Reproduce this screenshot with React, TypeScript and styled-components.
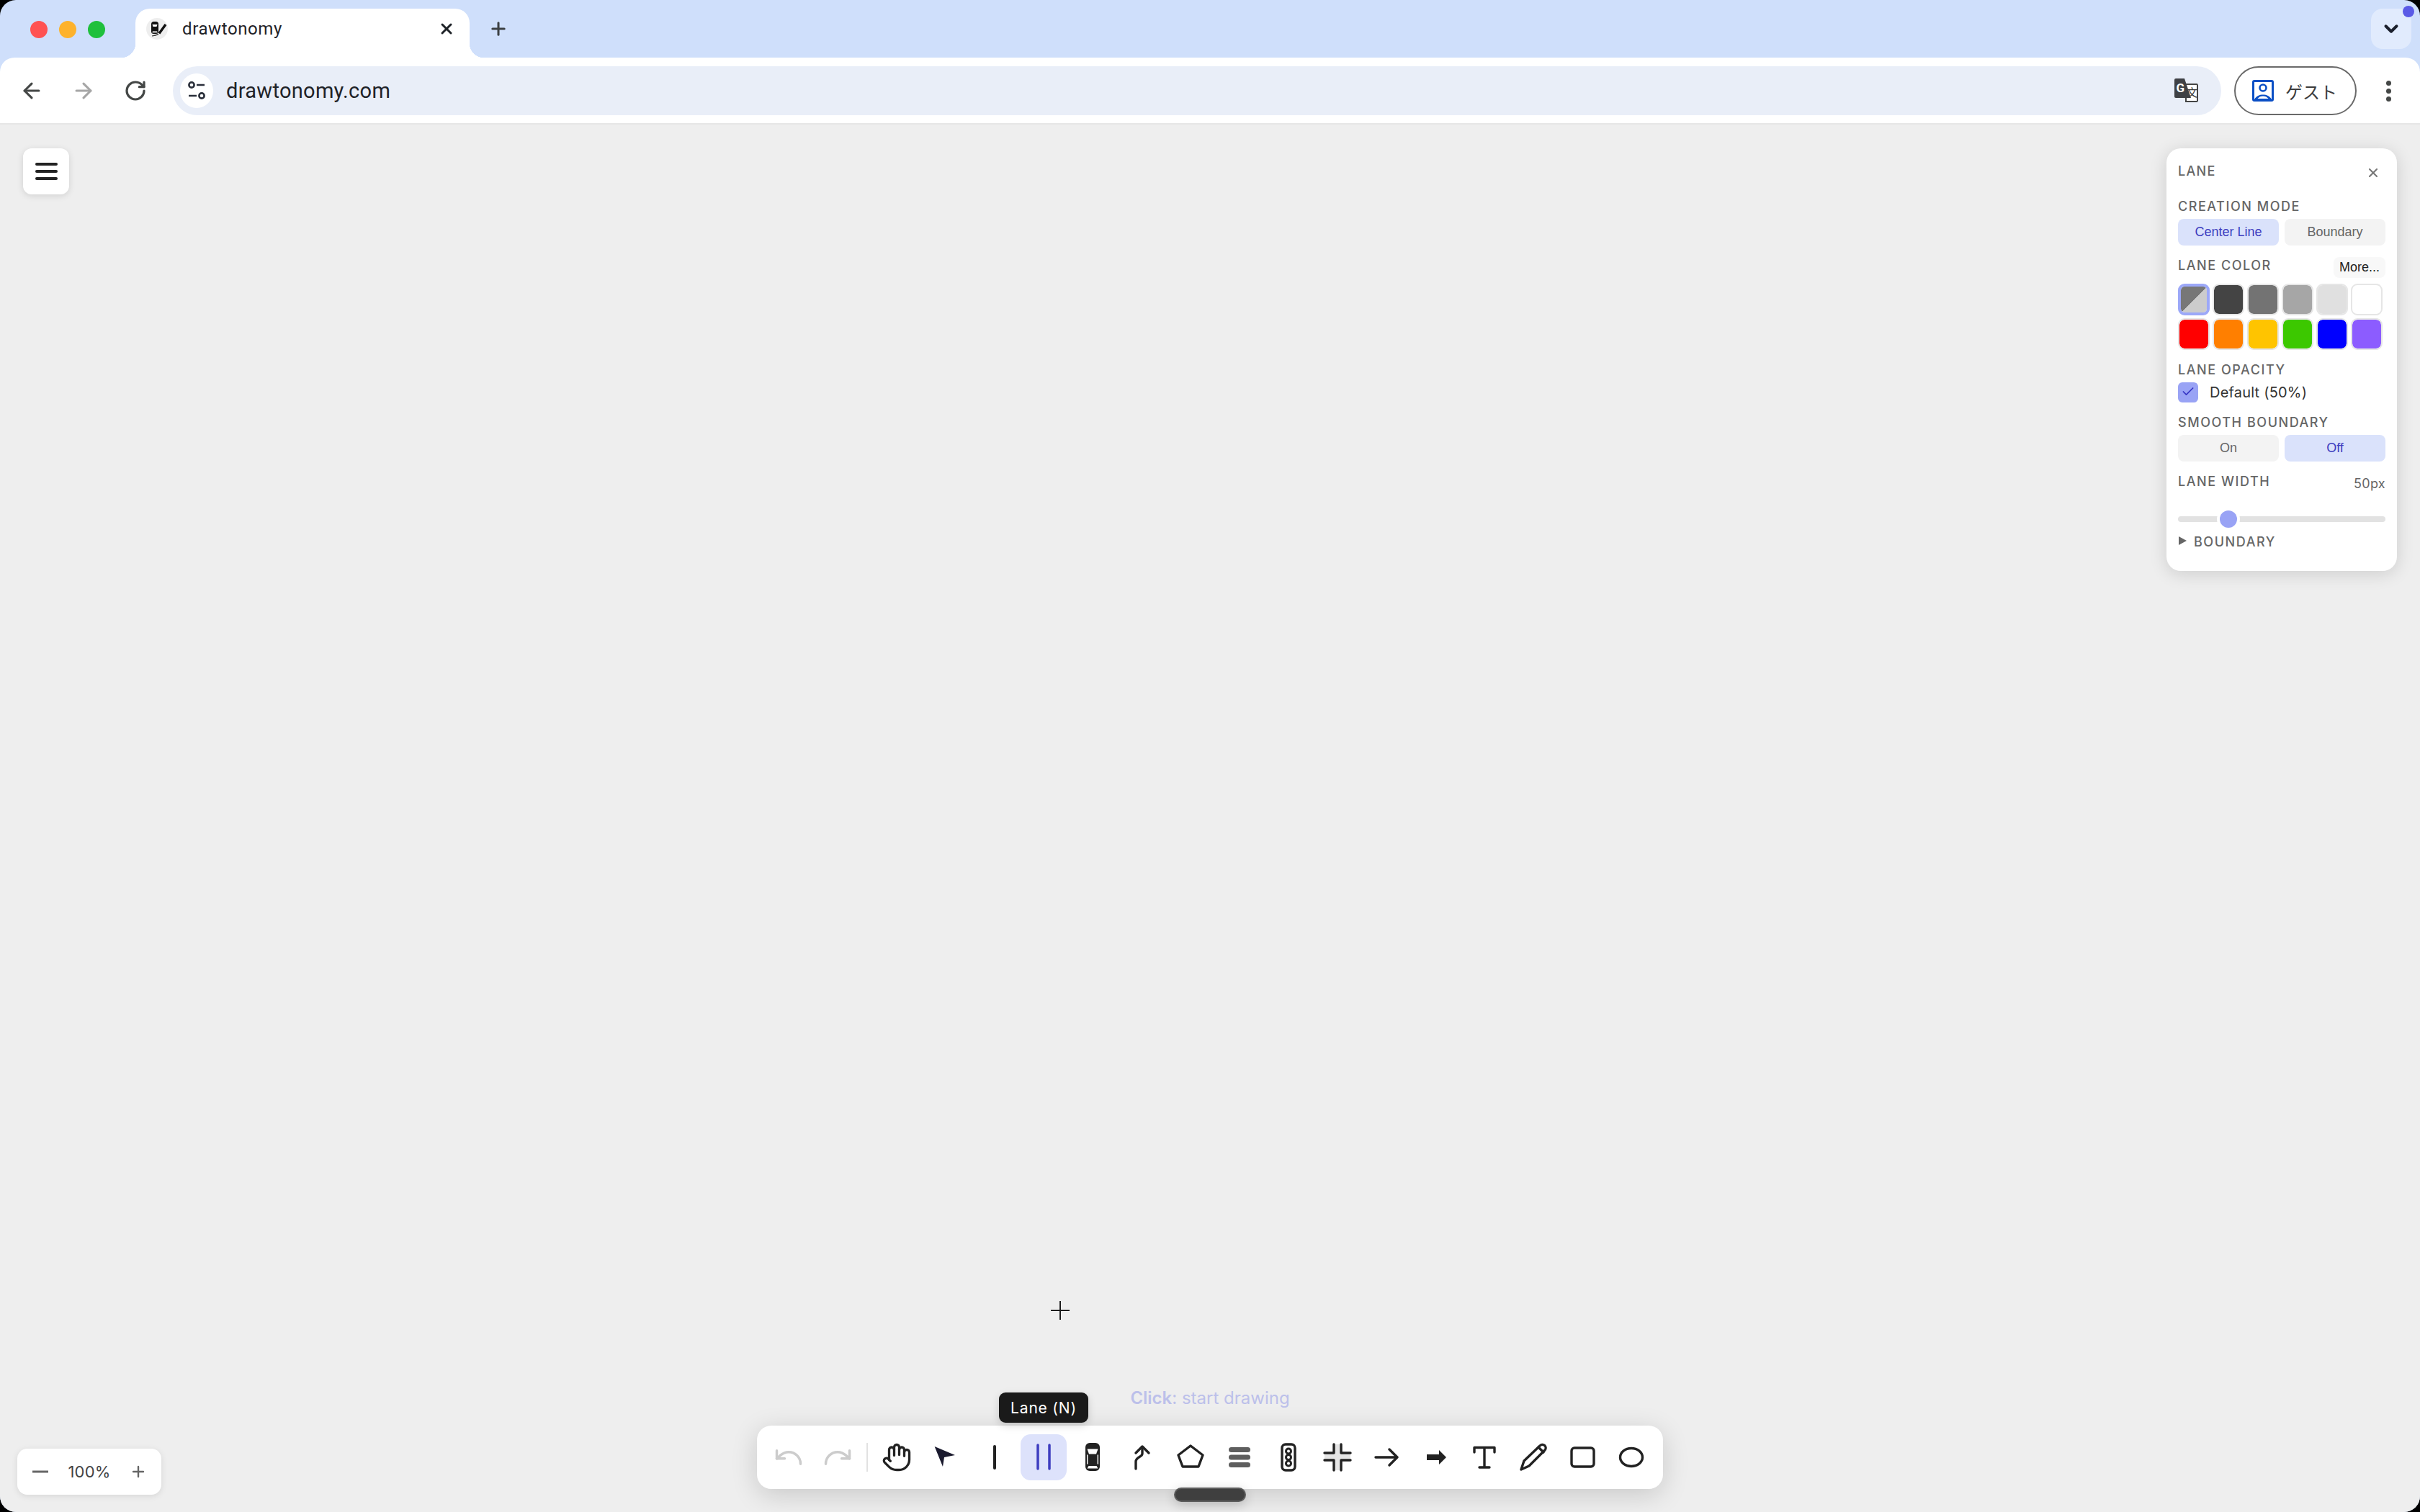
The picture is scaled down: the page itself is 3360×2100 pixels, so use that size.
import React from 'react';
import styled, { createGlobalStyle } from 'styled-components';
import { ArrowLeft, ArrowRight, RotateCw, Undo, Redo, Hand, X, Plus, ChevronDown, Check } from 'lucide-react';

const GlobalStyle = createGlobalStyle`
  html, body {
    margin: 0;
    background: #000;
  }
  * {
    box-sizing: border-box;
  }
`;

const BrowserWindow = styled.div`
  width: 3360px;
  height: 2100px;
  display: flex;
  flex-direction: column;
  overflow: hidden;
  border-radius: 22px;
  background: #cfdffb;
  font-family: Inter, "Noto Sans CJK JP", sans-serif;
`;

const TabStrip = styled.div`
  height: 80px;
  flex: none;
  display: flex;
  align-items: flex-end;
  padding-left: 42px;
  padding-right: 12px;
`;

const TrafficLights = styled.div`
  display: flex;
  gap: 16px;
  width: 146px;
  align-self: flex-start;
  margin-top: 29px;
`;

const Light = styled.span<{ $color: string }>`
  width: 24px;
  height: 24px;
  border-radius: 50%;
  background: ${p => p.$color};
`;

const Tab = styled.div`
  position: relative;
  width: 464px;
  height: 68px;
  background: #fff;
  border-radius: 20px 20px 0 0;
  display: flex;
  align-items: center;
  padding: 0 20px 12px 14px;
  color: #1f2328;
  font-size: 24px;
  font-family: Roboto, sans-serif;

  &::before, &::after {
    content: '';
    position: absolute;
    bottom: 0;
    width: 20px;
    height: 20px;
  }
  &::before {
    left: -20px;
    background: radial-gradient(circle at 0 0, transparent 20px, #fff 20.5px);
  }
  &::after {
    right: -20px;
    background: radial-gradient(circle at 100% 0, transparent 20px, #fff 20.5px);
  }
`;

const TabTitle = styled.span`
  flex: 1;
  margin-left: 19px;
  letter-spacing: 0.6px;
`;

const NewTab = styled.div`
  margin-left: 26px;
  align-self: flex-start;
  margin-top: 26px;
  height: 28px;
  color: #3c4043;
  display: flex;
`;

const TabListButton = styled.div`
  position: relative;
  margin-left: auto;
  align-self: flex-start;
  margin-top: 12px;
  width: 56px;
  height: 56px;
  border-radius: 16px;
  background: #e1ebfd;
  color: #1a1f2c;
  display: flex;
  align-items: center;
  justify-content: center;
`;

const ProfileDot = styled.span`
  position: absolute;
  right: -4px;
  top: -4px;
  width: 16px;
  height: 16px;
  border-radius: 50%;
  background: #5a5ae6;
`;

const Toolbar = styled.div`
  height: 93px;
  flex: none;
  background: #fff;
  border-radius: 20px 20px 0 0;
  border-bottom: 2px solid #e6e6e6;
  display: flex;
  align-items: flex-start;
  padding: 12px 0 0 8px;
`;

const NavButton = styled.div<{ $dim?: boolean }>`
  width: 72px;
  height: 68px;
  display: flex;
  align-items: center;
  justify-content: center;
  color: ${p => (p.$dim ? '#a6a6a6' : '#444746')};
`;

const AddressBar = styled.div`
  width: 2844px;
  height: 68px;
  margin-left: 16px;
  border-radius: 34px;
  background: #e9eef8;
  display: flex;
  align-items: center;
  padding: 0 32px 0 10px;
`;

const TuneBadge = styled.div`
  width: 46px;
  height: 48px;
  border-radius: 50%;
  background: #fff;
  display: flex;
  align-items: center;
  justify-content: center;
`;

const Url = styled.span`
  flex: 1;
  margin-left: 18px;
  font-family: Roboto, sans-serif;
  font-size: 29px;
  letter-spacing: 0.3px;
  color: #1f2328;
`;

const GuestChip = styled.div`
  width: 170px;
  height: 68px;
  margin-left: 18px;
  border: 2px solid #6a6a6a;
  border-radius: 34px;
  display: flex;
  align-items: center;
  padding-left: 23px;
  gap: 16px;
  font-family: "Noto Sans CJK JP", sans-serif;
  font-size: 24px;
  color: #3c3c3c;
`;

const Kebab = styled.div`
  width: 7px;
  margin: 20px 0 0 41px;
  display: flex;
  flex-direction: column;
  gap: 4px;

  span {
    width: 7px;
    height: 7px;
    border-radius: 50%;
    background: #444746;
  }
`;

const Canvas = styled.main`
  position: relative;
  flex: 1;
  background: #eeeeee;
`;

const MenuButton = styled.div`
  position: absolute;
  left: 32px;
  top: 33px;
  width: 64px;
  height: 64px;
  border-radius: 12px;
  background: #fff;
  box-shadow: 0 2px 10px rgba(0, 0, 0, 0.12);
  display: flex;
  flex-direction: column;
  align-items: center;
  justify-content: center;
  gap: 6.5px;

  span {
    width: 31px;
    height: 3.5px;
    border-radius: 2px;
    background: #222;
  }
`;

const Panel = styled.aside`
  position: absolute;
  right: 32px;
  top: 33px;
  width: 320px;
  height: 587px;
  border-radius: 20px;
  background: #fff;
  box-shadow: 0 4px 24px rgba(0, 0, 0, 0.14);
  padding: 16px;
  display: flex;
  flex-direction: column;
`;

const PanelHeader = styled.div`
  height: 30px;
  display: flex;
  justify-content: space-between;
  align-items: center;
  margin-bottom: 23px;
`;

const PanelTitle = styled.span`
  font-size: 18px;
  font-weight: 500;
  letter-spacing: 1.3px;
  color: #666;
`;

const CloseIcon = styled.div`
  display: flex;
  color: #777;
  margin: 6px 7px 0 0;
`;

const Label = styled.div<{ $top?: number; $bottom?: number }>`
  height: 20px;
  font-size: 18px;
  line-height: 23px;
  font-weight: 500;
  letter-spacing: 1.55px;
  color: #666;
  margin-top: ${p => p.$top ?? 0}px;
  margin-bottom: ${p => p.$bottom ?? 0}px;
`;

const Segmented = styled.div`
  display: grid;
  grid-template-columns: 140px 140px;
  gap: 8px;
`;

const SegButton = styled.div<{ $active?: boolean }>`
  height: 37px;
  border-radius: 8px;
  display: flex;
  align-items: center;
  justify-content: center;
  font-family: "Liberation Sans", sans-serif;
  font-size: 18px;
  background: ${p => (p.$active ? '#dae2fb' : '#f3f3f3')};
  color: ${p => (p.$active ? '#3d3dc0' : '#666')};
`;

const SpacedRow = styled.div<{ $top: number; $bottom: number }>`
  display: flex;
  justify-content: space-between;
  align-items: flex-start;
  margin-top: ${p => p.$top}px;
  margin-bottom: ${p => p.$bottom}px;
`;

const MoreButton = styled.div`
  width: 72px;
  height: 29px;
  border-radius: 8px;
  background: #f8f8f8;
  display: flex;
  align-items: center;
  justify-content: center;
  font-family: "Liberation Sans", sans-serif;
  font-size: 18px;
  color: #222;
`;

const SwatchGrid = styled.div`
  display: grid;
  grid-template-columns: repeat(6, 44px);
  gap: 4px;
`;

const Swatch = styled.div<{ $fill: string; $selected?: boolean }>`
  height: 44px;
  border-radius: 9px;
  border: ${p => (p.$selected ? '4px solid #9ca8f8' : '2px solid #e6e6e6')};
  background: ${p => p.$fill};
  background-clip: padding-box;
`;

const CheckRow = styled.div`
  display: flex;
  align-items: center;
  gap: 16px;
  font-size: 20px;
  letter-spacing: 0.2px;
  color: #333;
`;

const CheckBox = styled.div`
  width: 28px;
  height: 28px;
  border-radius: 6px;
  background: #99a3f5;
  color: #3636c4;
  display: flex;
  align-items: flex-start;
  justify-content: center;
  padding-top: 3px;
`;

const WidthValue = styled.span`
  font-size: 18px;
  line-height: 30px;
  letter-spacing: 0.3px;
  color: #666;
`;

const SliderBox = styled.div`
  position: relative;
  height: 24px;
  display: flex;
  align-items: center;
`;

const SliderTrack = styled.div`
  width: 100%;
  height: 8px;
  border-radius: 4px;
  background: #e2e2e2;
`;

const SliderThumb = styled.div`
  position: absolute;
  top: 0;
  width: 24px;
  height: 24px;
  border-radius: 50%;
  background: #99a3f5;
  box-shadow: 0 0 0 4px #fff;
`;

const DisclosureRow = styled.div`
  display: flex;
  align-items: center;
  gap: 10px;
  margin-top: 8px;
  height: 20px;
`;

const Caret = styled.span`
  width: 0;
  height: 0;
  margin-left: 1px;
  border-left: 11px solid #666;
  border-top: 6px solid transparent;
  border-bottom: 6px solid transparent;
`;

const ZoomBox = styled.div`
  position: absolute;
  left: 24px;
  bottom: 24px;
  width: 200px;
  height: 64px;
  border-radius: 14px;
  background: #fff;
  box-shadow: 0 2px 10px rgba(0, 0, 0, 0.1);
  display: flex;
  align-items: center;
  justify-content: space-between;
  padding: 0 20px;
  color: #666;
  font-size: 22px;
`;

const ZoomValue = styled.span`
  color: #444;
  letter-spacing: 0.2px;
`;

const Crosshair = styled.svg`
  position: absolute;
  left: 1458px;
  top: 1633px;
`;

const ToolDock = styled.nav`
  position: absolute;
  left: 50%;
  bottom: 32px;
  transform: translateX(-50%);
  width: 1258px;
  height: 88px;
  padding: 12px;
  border-radius: 20px;
  background: #fff;
  box-shadow: 0 8px 36px rgba(0, 0, 0, 0.16);
  display: flex;
  align-items: center;
  gap: 4px;
`;

const ToolButton = styled.div<{ $active?: boolean; $disabled?: boolean }>`
  position: relative;
  width: 64px;
  height: 64px;
  flex: none;
  border-radius: 14px;
  display: flex;
  align-items: center;
  justify-content: center;
  background: ${p => (p.$active ? '#dde2fb' : 'transparent')};
  color: ${p => (p.$disabled ? '#cccccc' : p.$active ? '#3d3dc0' : '#222')};
`;

const Divider = styled.span`
  width: 2px;
  height: 40px;
  flex: none;
  margin: 0 4px;
  background: #e2e2e2;
`;

const Tooltip = styled.div`
  position: absolute;
  left: 50%;
  bottom: calc(100% + 16px);
  transform: translateX(-50%);
  height: 42px;
  width: 124px;
  border-radius: 9px;
  background: #1a1a1a;
  color: #fff;
  font-size: 21px;
  letter-spacing: 0.8px;
  display: flex;
  align-items: center;
  justify-content: center;
  box-shadow: 0 4px 12px rgba(0, 0, 0, 0.15);
  white-space: nowrap;
`;

const Hint = styled.div`
  position: absolute;
  left: 50%;
  bottom: calc(100% + 24px);
  transform: translateX(-50%);
  font-size: 24px;
  line-height: 28px;
  color: #bcc0ea;
  white-space: nowrap;

  b {
    font-weight: 600;
  }
`;

const DockHandle = styled.div`
  position: absolute;
  left: 50%;
  bottom: 14px;
  transform: translateX(-50%);
  width: 100px;
  height: 20px;
  border-radius: 10px;
  background: #3f3f3f;
  border: 2px solid #5c5c5c;
  box-shadow: 0 4px 16px rgba(0, 0, 0, 0.2);
`;

const Glyph = styled.svg.attrs({ width: 64, height: 64, viewBox: '0 0 64 64', fill: 'none' })`
  stroke: currentColor;
  stroke-width: 3.4;
  stroke-linecap: round;
  stroke-linejoin: round;
`;

const SelectIcon = () => (
  <Glyph><path d="M16.6 17 45 29l-15 3-2 13Z" fill="#1a1a2e" stroke="none" /></Glyph>
);
const LineIcon = () => (
  <Glyph><path d="M32 17v30" strokeWidth="4" /></Glyph>
);
const LaneIcon = () => (
  <Glyph><path d="M24 15v33M40 15v33" strokeWidth="3.5" /></Glyph>
);
const CarIcon = () => (
  <Glyph>
    <rect x="22" y="12" width="20" height="39" rx="6" fill="#222" stroke="none" />
    <path d="M24.5 20.5h15l-2.5 7h-10Z" fill="#fff" stroke="none" />
    <path d="M26.5 44h11l2 3.5h-15Z" fill="#fff" stroke="none" />
    <path d="M24.7 29v12M39.3 29v12" stroke="#fff" strokeWidth="1.4" />
  </Glyph>
);
const PathIcon = () => (
  <Glyph strokeWidth="4">
    <path d="M24 26l9-9 9 9" />
    <path d="M33 18v9c0 5-9 4-9 11v10" />
  </Glyph>
);
const PolygonIcon = () => (
  <Glyph><path d="M32 16 49 29l-6 16H21l-6-16Z" /></Glyph>
);
const LanesIcon = () => (
  <Glyph>
    <rect x="17" y="18" width="30" height="7" rx="3.5" fill="#5e5e5e" stroke="none" />
    <rect x="17" y="28.5" width="30" height="7" rx="3.5" fill="#5e5e5e" stroke="none" />
    <rect x="17" y="39" width="30" height="7" rx="3.5" fill="#5e5e5e" stroke="none" />
  </Glyph>
);
const TrafficIcon = () => (
  <Glyph>
    <rect x="23" y="14" width="18" height="36" rx="5" />
    <circle cx="32" cy="23.5" r="3.5" strokeWidth="3" />
    <circle cx="32" cy="32" r="3.5" strokeWidth="3" />
    <circle cx="32" cy="40.5" r="3.5" strokeWidth="3" />
  </Glyph>
);
const IntersectionIcon = () => (
  <Glyph>
    <path d="M27 14h10v12h13v10H37v14H27V36H14V26h13Z" fill="#e6e6e6" stroke="none" />
    <path d="M27 14v12H14M37 14v12h13M27 50V36H14M37 50V36h13" />
  </Glyph>
);
const ArrowIcon = () => (
  <Glyph strokeWidth="3"><path d="M17 32h30M36 21l11 11-11 11" /></Glyph>
);
const ThickArrowIcon = () => (
  <Glyph>
    <path d="M20 28h17v-6l10 10-10 10v-6H20Z" fill="#222" stroke="none" />
  </Glyph>
);
const TextIcon = () => (
  <Glyph strokeWidth="3">
    <path d="M18 25v-6.5h28V25M32 18.5V46M25 46h14" />
  </Glyph>
);
const PencilIcon = () => (
  <Glyph strokeWidth="3">
    <path d="M15 49l4-12 22-21a4.6 4.6 0 0 1 7 6L26 44Z" />
    <path d="M39 18l7 7" />
  </Glyph>
);
const RectIcon = () => (
  <Glyph><rect x="17" y="19" width="31" height="26" rx="4" /></Glyph>
);
const EllipseIcon = () => (
  <Glyph><ellipse cx="32" cy="32" rx="15.5" ry="12.5" /></Glyph>
);

const Favicon = () => (
  <svg width="32" height="32" viewBox="0 0 32 32">
    <circle cx="16" cy="16" r="15" fill="#eeeeee" />
    <rect x="8" y="6" width="10" height="17" rx="3.5" fill="#111" />
    <path d="M9.5 10h7l-1 3h-5Z" fill="#fff" />
    <path d="M10 19.5h6l.8 1.8H9.2Z" fill="#fff" />
    <path d="M19 22.5 28 10" stroke="#111" strokeWidth="3.4" />
    <path d="M9 26c3-.4 6-1 9-2.6" stroke="#333" strokeWidth="1.2" fill="none" />
  </svg>
);

const TuneIcon = () => (
  <svg width="26" height="28" viewBox="0 0 26 28" fill="none" stroke="#2a2f3a" strokeWidth="2.6">
    <circle cx="6" cy="6" r="3.6" />
    <path d="M13 6h11M2 21h11" />
    <circle cx="20" cy="21" r="3.6" />
  </svg>
);

const TranslateIcon = () => (
  <svg width="34" height="34" viewBox="0 0 34 34">
    <path d="M17 8h15a1.5 1.5 0 0 1 1 1.5V31a1.5 1.5 0 0 1-1 1H17Z" fill="#fff" stroke="#444" strokeWidth="2" />
    <text x="18" y="25" fontSize="15" fontFamily="'Noto Sans CJK SC', sans-serif" fill="#333">文</text>
    <path d="M1 2a2 2 0 0 1 2-2h12l9 27H3a2 2 0 0 1-2-2Z" fill="#3f4145" />
    <text x="3.5" y="19" fontSize="17" fontWeight="700" fontFamily="Roboto, sans-serif" fill="#fff">G</text>
  </svg>
);

const GuestIcon = () => (
  <svg width="30" height="30" viewBox="0 0 30 30" fill="none">
    <rect width="30" height="30" rx="3" fill="#0b4fc5" />
    <rect x="3" y="3" width="24" height="24" fill="#fff" />
    <circle cx="15" cy="11" r="4.5" stroke="#0b4fc5" strokeWidth="2.6" />
    <path d="M3 27c3-5 7-6.5 12-6.5S24 22 27 27Z" fill="#0b4fc5" />
    <path d="M7.5 26c2-2.5 4.5-3.500 7.5-3.500s5.500 1 7.500 3.500Z" fill="#fff" />
  </svg>
);

const Minus = () => (
  <svg width="24" height="24" viewBox="0 0 24 24"><path d="M1 12h22" stroke="#666" strokeWidth="3" /></svg>
);

const colorSwatches = [
  'linear-gradient(to bottom right, #777 50%, #ccc 50%)',
  '#444444', '#737373', '#a6a6a6', '#e0e0e0', '#ffffff',
  '#ff0000', '#ff7f00', '#ffc400', '#3cc800', '#0000ff', '#8c5cff',
];

const App = () => {
  const laneWidthOffset = 58;
  return (
    <BrowserWindow>
      <GlobalStyle />
      <TabStrip>
        <TrafficLights>
          <Light $color="#ff5252" />
          <Light $color="#fdb22c" />
          <Light $color="#1fc03c" />
        </TrafficLights>
        <Tab>
          <Favicon />
          <TabTitle>drawtonomy</TabTitle>
          <X size={24} color="#1f2328" strokeWidth={3} />
        </Tab>
        <NewTab><Plus size={28} strokeWidth={2.6} /></NewTab>
        <TabListButton>
          <ChevronDown size={30} strokeWidth={3.2} />
          <ProfileDot />
        </TabListButton>
      </TabStrip>

      <Toolbar>
        <NavButton><ArrowLeft size={34} strokeWidth={2.2} /></NavButton>
        <NavButton $dim><ArrowRight size={34} strokeWidth={2.2} /></NavButton>
        <NavButton><RotateCw size={32} strokeWidth={2.4} /></NavButton>
        <AddressBar>
          <TuneBadge><TuneIcon /></TuneBadge>
          <Url>drawtonomy.com</Url>
          <TranslateIcon />
        </AddressBar>
        <GuestChip>
          <GuestIcon />
          ゲスト
        </GuestChip>
        <Kebab><span /><span /><span /></Kebab>
      </Toolbar>

      <Canvas>
        <MenuButton><span /><span /><span /></MenuButton>

        <Panel>
          <PanelHeader>
            <PanelTitle>LANE</PanelTitle>
            <CloseIcon><X size={20} strokeWidth={2.6} /></CloseIcon>
          </PanelHeader>

          <Label $bottom={9}>CREATION MODE</Label>
          <Segmented>
            <SegButton $active>Center Line</SegButton>
            <SegButton>Boundary</SegButton>
          </Segmented>

          <SpacedRow $top={16} $bottom={8}>
            <Label>LANE COLOR</Label>
            <MoreButton>More...</MoreButton>
          </SpacedRow>
          <SwatchGrid>
            {colorSwatches.map((fill, i) => (
              <Swatch key={i} $fill={fill} $selected={i === 0} />
            ))}
          </SwatchGrid>

          <Label $top={16} $bottom={9}>LANE OPACITY</Label>
          <CheckRow>
            <CheckBox><Check size={20} strokeWidth={2} /></CheckBox>
            Default (50%)
          </CheckRow>

          <Label $top={16} $bottom={9}>SMOOTH BOUNDARY</Label>
          <Segmented>
            <SegButton>On</SegButton>
            <SegButton $active>Off</SegButton>
          </Segmented>

          <SpacedRow $top={16} $bottom={22}>
            <Label>LANE WIDTH</Label>
            <WidthValue>50px</WidthValue>
          </SpacedRow>
          <SliderBox>
            <SliderTrack />
            <SliderThumb style={{ left: laneWidthOffset }} />
          </SliderBox>

          <DisclosureRow>
            <Caret />
            <Label>BOUNDARY</Label>
          </DisclosureRow>
        </Panel>

        <Crosshair width="28" height="28" viewBox="0 0 28 28">
          <path d="M14 1v26M1 14h26" stroke="#fff" strokeWidth="4" opacity="0.6" />
          <path d="M14 1v26M1 14h26" stroke="#1c1c1c" strokeWidth="2" />
        </Crosshair>

        <ZoomBox>
          <Minus />
          <ZoomValue>100%</ZoomValue>
          <Plus size={24} strokeWidth={2.4} />
        </ZoomBox>

        <ToolDock>
          <Hint><b>Click</b>: start drawing</Hint>
          <ToolButton $disabled><Undo size={44} strokeWidth={1.9} /></ToolButton>
          <ToolButton $disabled><Redo size={44} strokeWidth={1.9} /></ToolButton>
          <Divider />
          <ToolButton><Hand size={42} strokeWidth={1.9} /></ToolButton>
          <ToolButton><SelectIcon /></ToolButton>
          <ToolButton><LineIcon /></ToolButton>
          <ToolButton $active>
            <LaneIcon />
            <Tooltip>Lane (N)</Tooltip>
          </ToolButton>
          <ToolButton><CarIcon /></ToolButton>
          <ToolButton><PathIcon /></ToolButton>
          <ToolButton><PolygonIcon /></ToolButton>
          <ToolButton><LanesIcon /></ToolButton>
          <ToolButton><TrafficIcon /></ToolButton>
          <ToolButton><IntersectionIcon /></ToolButton>
          <ToolButton><ArrowIcon /></ToolButton>
          <ToolButton><ThickArrowIcon /></ToolButton>
          <ToolButton><TextIcon /></ToolButton>
          <ToolButton><PencilIcon /></ToolButton>
          <ToolButton><RectIcon /></ToolButton>
          <ToolButton><EllipseIcon /></ToolButton>
        </ToolDock>
        <DockHandle />
      </Canvas>
    </BrowserWindow>
  );
};

export default App;
